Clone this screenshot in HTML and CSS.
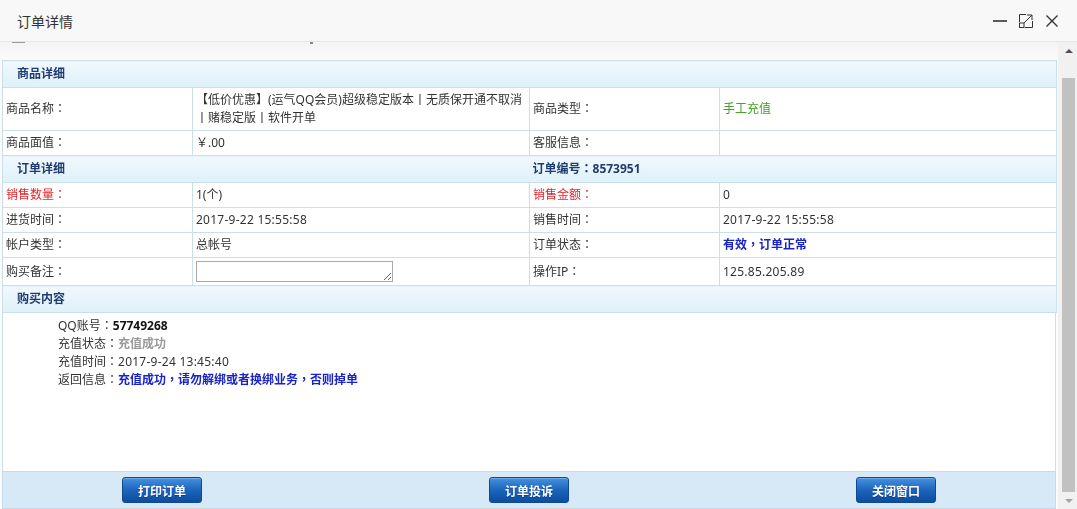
FILE: index.html
```html
<!DOCTYPE html>
<html lang="zh-CN">
<head>
<meta charset="utf-8">
<title>订单详情</title>
<link rel="stylesheet" href="styles.css">
</head>
<body>
<div class="dialog">
  <div class="titlebar">
    <span class="title">订单详情</span>
    <div class="win-ctrls">
      <svg class="ico" width="14" height="14" viewBox="0 0 14 14"><path d="M0 7h14" stroke="#333" stroke-width="1.6" fill="none"/></svg>
      <svg class="ico" width="14" height="14" viewBox="0 0 14 14" fill="none" stroke="#333" stroke-width="1"><path d="M0.5 8V0.5H7M13.5 7V13.5H6"/><rect x="0.5" y="9" width="4.5" height="4.5"/><path d="M5 9L12.8 1.2M8 1H13V6"/></svg>
      <svg class="ico" width="14" height="14" viewBox="0 0 14 14"><path d="M1.5 1.5L12.5 12.5M12.5 1.5L1.5 12.5" stroke="#333" stroke-width="1.4" fill="none"/></svg>
    </div>
  </div>
  <div class="body">
    <div class="viewport">
      <div class="cut-row"><span class="cut-mark"></span><span class="cut-dot"></span></div>
      <table class="detail">
        <colgroup><col class="c1"><col class="c2"><col class="c3"><col class="c4"></colgroup>
        <tr class="sec h27"><td colspan="4" class="sec-title">商品详细</td></tr>
        <tr class="h43"><td>商品名称<span class="pc" lang="zh-TW">：</span></td><td>【低价优惠】(运气QQ会员)超级稳定版本丨无质保开通不取消丨赌稳定版丨软件开单</td><td>商品类型<span class="pc" lang="zh-TW">：</span></td><td class="green">手工充值</td></tr>
        <tr class="h25"><td>商品面值<span class="pc" lang="zh-TW">：</span></td><td>￥.00</td><td>客服信息<span class="pc" lang="zh-TW">：</span></td><td></td></tr>
        <tr class="sec h27"><td colspan="2" class="sec-title">订单详细</td><td colspan="2" class="sec-right">订单编号<span class="pc" lang="zh-TW">：</span>8573951</td></tr>
        <tr class="h25"><td class="red">销售数量<span class="pc" lang="zh-TW">：</span></td><td>1(个)</td><td class="red">销售金额<span class="pc" lang="zh-TW">：</span></td><td>0</td></tr>
        <tr class="h25"><td>进货时间<span class="pc" lang="zh-TW">：</span></td><td class="num">2017-9-22 15:55:58</td><td>销售时间<span class="pc" lang="zh-TW">：</span></td><td class="num">2017-9-22 15:55:58</td></tr>
        <tr class="h25"><td>帐户类型<span class="pc" lang="zh-TW">：</span></td><td>总帐号</td><td>订单状态<span class="pc" lang="zh-TW">：</span></td><td class="blue">有效<span class="pc" lang="zh-TW">，</span>订单正常</td></tr>
        <tr class="h28"><td>购买备注<span class="pc" lang="zh-TW">：</span></td><td><textarea class="note"></textarea></td><td>操作IP<span class="pc" lang="zh-TW">：</span></td><td class="num">125.85.205.89</td></tr>
        <tr class="sec h27"><td colspan="4" class="sec-title">购买内容</td></tr>
      </table>
      <div class="content">
        <p>QQ账号<span class="pc" lang="zh-TW">：</span><b class="dark">57749268</b></p>
        <p>充值状态<span class="pc" lang="zh-TW">：</span><b class="gray">充值成功</b></p>
        <p>充值时间<span class="pc" lang="zh-TW">：</span><span class="num">2017-9-24 13:45:40</span></p>
        <p>返回信息<span class="pc" lang="zh-TW">：</span><b class="blue">充值成功<span class="pc" lang="zh-TW">，</span>请勿解绑或者换绑业务<span class="pc" lang="zh-TW">，</span>否则掉单</b></p>
      </div>
      <div class="footer">
        <button class="btn">打印订单</button>
        <button class="btn">订单投诉</button>
        <button class="btn">关闭窗口</button>
      </div>
    </div>
    <div class="scrollbar">
      <div class="sb-btn"><span class="tri-up"></span></div>
      <div class="sb-thumb"></div>
      <div class="sb-btn"><span class="tri-down"></span></div>
    </div>
  </div>
</div>
</body>
</html>
```
FILE: styles.css
```css
* { box-sizing: border-box; }
html, body { margin: 0; padding: 0; }
body {
  width: 1077px;
  height: 509px;
  overflow: hidden;
  font-family: "Noto Sans", "Noto Sans CJK SC", sans-serif;
  font-size: 12px;
  color: #333;
  background: #fff;
}
.dialog {
  width: 1077px;
  height: 509px;
  display: flex;
  flex-direction: column;
  background: #fff;
}
.titlebar {
  height: 42px;
  flex: none;
  display: flex;
  align-items: center;
  justify-content: space-between;
  background: #f8f8f8;
  border-bottom: 1px solid #e6e6e6;
  padding: 0 18px 0 17px;
}
.title {
  font-family: "Noto Sans CJK SC", sans-serif;
  font-size: 14px;
  color: #333;
}
.win-ctrls {
  display: flex;
  align-items: center;
  gap: 12px;
  padding-top: 1px;
}
.ico { display: block; }

.pc {
  font-family: "Noto Sans CJK TC", "Noto Sans CJK SC", sans-serif;
  line-height: 1;
}
.num { letter-spacing: 0.25px; }

.body {
  flex: 1;
  display: flex;
  min-height: 0;
}
.viewport {
  flex: 1;
  overflow: hidden;
  background: linear-gradient(#f4f4f4, #fbfbfb 18px, #fbfbfb);
  padding-left: 2px;
}
.cut-row {
  height: 18px;
  display: flex;
  align-items: flex-start;
}
.cut-mark {
  margin-left: 10px;
  width: 13px;
  height: 1px;
  background: #9a9a9a;
}
.cut-dot {
  margin-left: 285px;
  width: 3px;
  height: 2px;
  background: #888;
}

.detail {
  width: 1054px;
  border-collapse: collapse;
  table-layout: fixed;
  background: #fff;
}
.detail col.c1 { width: 190px; }
.detail col.c2 { width: 337px; }
.detail col.c3 { width: 190px; }
.detail col.c4 { width: 337px; }
.detail td {
  border: 1px solid #c9dfea;
  padding: 0 3px;
  line-height: 18px;
  vertical-align: middle;
  font-size: 12px;
  color: #333;
}
.h25 { height: 25px; }
.h27 { height: 27px; }
.h28 { height: 28px; }
.h43 { height: 43px; }
.sec td {
  background: linear-gradient(#eff8fd, #dff1f9);
  font-weight: bold;
  color: #1f3b70;
}
.detail td.sec-title { padding-left: 14px; }
.detail td.sec-right { border-left-style: hidden; padding-left: 3px; }
.detail td.red { color: #e3262c; }
.detail td.green { color: #46a02a; }
.detail td.blue { color: #1a24c6; font-weight: bold; }
.note {
  display: block;
  width: 197px;
  height: 21px;
  margin: 0;
  padding: 1px 2px;
  border: 1px solid #a9a9a9;
  font: inherit;
  background: #fff;
}

.content {
  width: 1054px;
  height: 158px;
  background: #fff;
  border-left: 1px solid #c9dfea;
  border-right: 1px solid #c9dfea;
  padding: 4px 0 0 55px;
}
.content p {
  margin: 0;
  height: 18px;
  line-height: 18px;
  color: #333;
}
.content .dark { color: #111; }
.content .gray { color: #999; }
.content .blue { color: #1a24c6; }

.footer {
  width: 1054px;
  height: 38px;
  background: #d7e9f7;
  border: 1px solid #c3dbea;
  border-bottom-color: #c9d6df;
  display: flex;
  justify-content: center;
  align-items: flex-start;
  gap: 287px;
  padding-top: 5px;
}
.btn {
  width: 80px;
  height: 26px;
  margin: 0;
  padding: 0;
  border: 1px solid #0f4a90;
  border-radius: 3px;
  background: linear-gradient(#4592de, #1c64bd 50%, #0b4d9f);
  color: #fff;
  font-family: "Noto Sans CJK SC", sans-serif;
  font-size: 12px;
  font-weight: bold;
  text-shadow: 0 1px 1px rgba(0,0,0,0.3);
  box-shadow: inset 0 1px 0 rgba(255,255,255,0.25);
}

.scrollbar {
  width: 19px;
  flex: none;
  background: #f1f1f1;
  display: flex;
  flex-direction: column;
  padding-left: 4px;
  padding-right: 2px;
}
.sb-btn {
  height: 18px;
  display: flex;
  align-items: center;
  justify-content: center;
}
.sb-btn:last-child { height: 17px; }
.sb-thumb {
  margin-top: 18px;
  height: 414px;
  background: #c1c1c1;
}
.tri-up {
  width: 0;
  height: 0;
  border-left: 4px solid transparent;
  border-right: 4px solid transparent;
  border-bottom: 4px solid #505050;
}
.tri-down {
  width: 0;
  height: 0;
  border-left: 4px solid transparent;
  border-right: 4px solid transparent;
  border-top: 4px solid #a3a3a3;
}
```
